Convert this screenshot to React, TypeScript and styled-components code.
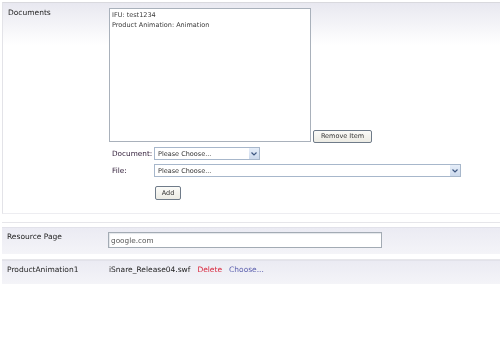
import React from "react";
import styled, { createGlobalStyle } from "styled-components";

const Global = createGlobalStyle`
  html, body { margin: 0; padding: 0; background: #fff; overflow: hidden; }
  body { font-family: "DejaVu Sans", Verdana, sans-serif; color: #333; }
`;

const Page = styled.div`
  width: 520px;
  padding: 2px 0 0 2px;
  display: flex;
  flex-direction: column;
  will-change: transform;
`;

const DocRow = styled.div`
  display: flex;
  height: 212px;
  box-sizing: border-box;
  border-top: 1px solid #d9d9de;
  border-left: 1px solid #e3e3e8;
  border-bottom: 1px solid #ededf1;
  background: linear-gradient(#e8e8f0 0px, #ffffff 42px);
`;

const Section = styled.div<{ $gap: number; $pad: number }>`
  margin-top: ${(p) => p.$gap}px;
  border-top: 1px solid #e6e6ea;
  padding-top: ${(p) => p.$pad}px;
`;

const Panel = styled.div<{ $h: number }>`
  display: flex;
  align-items: flex-start;
  height: ${(p) => p.$h}px;
  box-sizing: border-box;
  padding-top: 4px;
  border-top: 1px solid #e2e2ea;
  background: linear-gradient(#ebebf3, #f4f4f8);
`;

const Label = styled.div<{ $pt?: number }>`
  width: 106px;
  flex: none;
  box-sizing: border-box;
  padding: ${(p) => p.$pt ?? 0}px 0 0 5px;
  font-size: 7.5px;
  line-height: 10px;
  color: #1e1e1e;
`;

const Content = styled.div`
  display: flex;
  flex-direction: column;
  padding-top: 5px;
`;

const ListArea = styled.div`
  display: flex;
  align-items: flex-end;
  gap: 2px;
`;

const ListBox = styled.div`
  width: 202px;
  height: 134px;
  box-sizing: border-box;
  border: 1px solid #a9b1bb;
  background: #fff;
  padding: 1px 0 0 2px;
  font-size: 6.5px;
  line-height: 10px;
  color: #3a3a3a;
`;

const Button = styled.button<{ $w: number; $h: number; $mb?: number }>`
  width: ${(p) => p.$w}px;
  height: ${(p) => p.$h}px;
  margin-bottom: ${(p) => p.$mb ?? 0}px;
  padding: 0;
  box-sizing: border-box;
  border: 1px solid #6f7b89;
  border-radius: 2px;
  background: linear-gradient(#fbfbf8, #ecebe4);
  font-family: "DejaVu Sans", Verdana, sans-serif;
  font-size: 6.5px;
  color: #333;
  line-height: 1;
`;

const FieldGrid = styled.div`
  display: grid;
  grid-template-columns: 42px auto;
  row-gap: 4px;
  align-items: center;
  margin: 5px 0 0 3px;
`;

const FieldLabel = styled.div`
  font-size: 7.3px;
  color: #2e1a36;
`;

const Select = styled.div<{ $w: number }>`
  width: ${(p) => p.$w}px;
  height: 13px;
  box-sizing: border-box;
  border: 1px solid #a7b7cb;
  background: #fff;
  display: flex;
  align-items: center;
  justify-content: space-between;
  font-size: 6.5px;
  color: #333;
  padding-left: 3px;
`;

const Arrow = styled.span`
  width: 10px;
  height: 11px;
  background: linear-gradient(#e6eef9, #ccd9ec);
  display: flex;
  align-items: center;
  justify-content: center;
`;

const AddWrap = styled.div`
  grid-column: 2;
  margin-top: -1px;
  padding-left: 1px;
`;

const Input = styled.input`
  width: 274px;
  height: 16px;
  box-sizing: border-box;
  border: 1px solid #a3abb4;
  box-shadow: inset 1px 1px 1px #e3e6ea;
  background: #fff;
  padding: 0 0 0 2px;
  font-family: "DejaVu Sans", Verdana, sans-serif;
  font-size: 7.3px;
  color: #555;
  outline: none;
`;

const FileLine = styled.div`
  display: flex;
  gap: 7px;
  padding-left: 1px;
  font-size: 7.5px;
  line-height: 10px;
  color: #1e1e1e;
`;

const Link = styled.span<{ $c: string }>`
  color: ${(p) => p.$c};
`;

const Chevron = () => (
  <svg width="6" height="4" viewBox="0 0 6 4">
    <path d="M0.5 0.5 L3 3 L5.5 0.5" fill="none" stroke="#3d5680" strokeWidth="1.2" />
  </svg>
);

export default function App() {
  return (
    <>
      <Global />
      <Page>
        <DocRow>
          <Label $pt={5}>Documents</Label>
          <Content>
            <ListArea>
              <ListBox>
                <div>IFU: test1234</div>
                <div>Product Animation: Animation</div>
              </ListBox>
              <Button $w={59} $h={13} $mb={-1}>Remove Item</Button>
            </ListArea>
            <FieldGrid>
              <FieldLabel>Document:</FieldLabel>
              <Select $w={106}>
                Please Choose...
                <Arrow><Chevron /></Arrow>
              </Select>
              <FieldLabel>File:</FieldLabel>
              <Select $w={307}>
                Please Choose...
                <Arrow><Chevron /></Arrow>
              </Select>
              <AddWrap>
                <Button $w={26} $h={14}>Add</Button>
              </AddWrap>
            </FieldGrid>
          </Content>
        </DocRow>
        <Section $gap={8} $pad={4}>
          <Panel $h={27}>
            <Label>Resource Page</Label>
            <Input readOnly value="google.com" />
          </Panel>
        </Section>
        <Section $gap={5} $pad={0}>
          <Panel $h={24}>
            <Label>ProductAnimation1</Label>
            <FileLine>
              <span>iSnare_Release04.swf</span>
              <Link $c="#d9263c">Delete</Link>
              <Link $c="#5b5fae">Choose...</Link>
            </FileLine>
          </Panel>
        </Section>
      </Page>
    </>
  );
}
